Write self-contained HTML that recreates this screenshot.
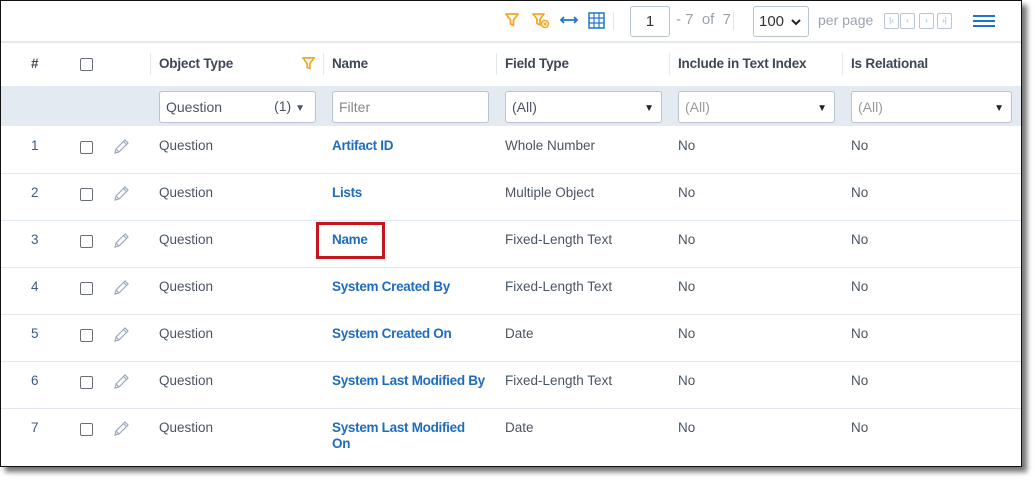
<!DOCTYPE html>
<html><head><meta charset="utf-8"><style>
*{margin:0;padding:0;box-sizing:border-box}
body{width:1035px;height:481px;background:#fff;position:relative;overflow:hidden;font-family:"Liberation Sans",Arial,sans-serif;font-size:13.5px;color:#4a5563}
.frame{position:absolute;left:0;top:0;width:1022px;height:467px;border:1.5px solid #111;border-top:1px solid #111;background:#fff;box-shadow:5px 5px 5px rgba(0,0,0,.55)}
.a{position:absolute;white-space:nowrap}
.hl{position:absolute;left:1px;width:1020px;height:1px;background:#e2e8f0}
.hd{font-weight:bold;color:#3d4756;top:56px;letter-spacing:-0.2px}
.sep{position:absolute;top:53px;width:1px;height:22px;background:#e3e8ee}
.inp{position:absolute;top:91px;height:32px;border:1px solid #b9c3cf;border-radius:3px;background:#fff;padding:7px 6px;font-size:14px;color:#4a5563}
.cb{position:absolute;left:80px;width:13px;height:13px;border:1px solid #6a6f76;border-radius:2px;background:#fff}
.lk{color:#1f6cbf;font-weight:bold;letter-spacing:-0.3px}
.tri{position:absolute;right:7px;top:11px;font-size:10px;color:#222}
.nb{position:absolute;top:13px;width:15px;height:16px;border:1px solid #b9c6d6;border-radius:2px;font-size:8px;color:#9fb0c6;text-align:center;line-height:14px}
</style></head><body>
<div class="frame"></div>
<svg class="a" style="left:504px;top:12px" width="16" height="16" viewBox="0 0 16 16"><path d="M2 2h12l-4.5 6v5.5l-3-1.5V8z" fill="none" stroke="#f5a623" stroke-width="1.8" stroke-linejoin="round"/></svg>
<svg class="a" style="left:532px;top:12px" width="18" height="17" viewBox="0 0 18 17"><path d="M1 2h11l-4 5v6l-3-1.5V7z" fill="none" stroke="#f5a623" stroke-width="1.8" stroke-linejoin="round"/><circle cx="13" cy="12" r="3.5" fill="none" stroke="#f5a623" stroke-width="1.5"/><path d="M11.5 10.5l3 3M14.5 10.5l-3 3" stroke="#f5a623" stroke-width="1.2"/></svg>
<svg class="a" style="left:559px;top:15px" width="20" height="10" viewBox="0 0 20 10"><path d="M2 5h16M5 2L2 5l3 3M15 2l3 3-3 3" fill="none" stroke="#1f74d0" stroke-width="1.8"/></svg>
<svg class="a" style="left:588px;top:12px" width="17" height="17" viewBox="0 0 17 17"><rect x="1" y="1" width="15" height="15" fill="none" stroke="#1f74d0" stroke-width="1.5"/><path d="M6 1v15M11 1v15M1 6h15M1 11h15" stroke="#1f74d0" stroke-width="1.2"/></svg>
<div class="a" style="left:613px;top:12px;width:1px;height:18px;background:#e2e6ea"></div>
<div class="a" style="left:630px;top:6px;width:40px;height:31px;border:1px solid #b9c3cf;border-radius:3px;text-align:center;line-height:29px;font-size:15px;color:#333">1</div>
<div class="a" style="left:676px;top:11px;font-size:15px;color:#9aa3ad">- 7 &nbsp;of &nbsp;7</div>
<div class="a" style="left:733px;top:12px;width:1px;height:18px;background:#e2e6ea"></div>
<div class="a" style="left:753px;top:6px;width:56px;height:31px;border:1px solid #b9c3cf;border-radius:3px;line-height:29px;font-size:15px;color:#333;padding-left:5px">100<svg style="position:absolute;right:7px;top:12px" width="10" height="7" viewBox="0 0 10 7"><path d="M1 1l4 4 4-4" fill="none" stroke="#222" stroke-width="2"/></svg></div>
<div class="a" style="left:818px;top:12px;font-size:14px;color:#9aa3ad">per page</div>
<div class="nb" style="left:884px">|‹</div><div class="nb" style="left:900px">‹</div><div class="nb" style="left:919px">›</div><div class="nb" style="left:937px">›|</div>
<div class="a" style="left:973px;top:15px;width:22px;height:2px;background:#1f74d0"></div>
<div class="a" style="left:973px;top:20px;width:22px;height:2px;background:#1f74d0"></div>
<div class="a" style="left:973px;top:25px;width:22px;height:2px;background:#1f74d0"></div>
<div class="hl" style="top:41px;height:2px"></div>
<div class="a hd" style="left:31px">#</div>
<div class="cb" style="top:58px"></div>
<div class="sep" style="left:150px"></div>
<div class="a hd" style="left:159px">Object Type</div>
<svg class="a" style="left:301px;top:56px" width="15" height="15" viewBox="0 0 16 16"><path d="M2 2h12l-4.5 6v5.5l-3-1.5V8z" fill="none" stroke="#f5a623" stroke-width="1.8" stroke-linejoin="round"/></svg>
<div class="sep" style="left:323px"></div>
<div class="a hd" style="left:332px">Name</div>
<div class="sep" style="left:496px"></div>
<div class="a hd" style="left:505px">Field Type</div>
<div class="sep" style="left:669px"></div>
<div class="a hd" style="left:678px">Include in Text Index</div>
<div class="sep" style="left:842px"></div>
<div class="a hd" style="left:851px">Is Relational</div>
<div class="a" style="left:1px;top:86px;width:1020px;height:40px;background:#e3eaf2"></div>
<div class="inp" style="left:159px;width:157px">Question<span style="position:absolute;right:10px;top:6px;font-size:14px">(1) <span style="font-size:10px">▼</span></span></div>
<div class="inp" style="left:332px;width:157px;color:#888">Filter</div>
<div class="inp" style="left:505px;width:157px">(All)<span class="tri">▼</span></div>
<div class="inp" style="left:678px;width:157px;color:#999">(All)<span class="tri">▼</span></div>
<div class="inp" style="left:851px;width:161px;color:#999">(All)<span class="tri">▼</span></div>
<div class="hl" style="top:173px"></div><div class="hl" style="top:220px"></div><div class="hl" style="top:267px"></div><div class="hl" style="top:314px"></div><div class="hl" style="top:361px"></div><div class="hl" style="top:408px"></div>
<div id="rows"></div>
<script>
var d=[["1","Artifact ID","Whole Number"],["2","Lists","Multiple Object"],["3","Name","Fixed-Length Text"],["4","System Created By","Fixed-Length Text"],["5","System Created On","Date"],["6","System Last Modified By","Fixed-Length Text"],["7","System Last Modified<br>On","Date"]];
var h="";
d.forEach(function(r,i){var y=138+i*47;
h+='<div class="a" style="left:31px;top:'+y+'px;color:#3d5a80">'+r[0]+'</div>';
h+='<div class="cb" style="top:'+(y+3)+'px"></div>';
h+='<svg class="a" style="left:112px;top:'+y+'px" width="18" height="18" viewBox="0 0 18 18"><path d="M3 15l1-4L13 2l3 3-9 9zM4 11l3 3M11.5 3.5l3 3" fill="none" stroke="#9aa8bd" stroke-width="1.2"/></svg>';
h+='<div class="a" style="left:159px;top:'+y+'px">Question</div>';
h+='<div class="a lk" style="left:332px;top:'+y+'px;line-height:16px">'+r[1]+'</div>';
h+='<div class="a" style="left:505px;top:'+y+'px">'+r[2]+'</div>';
h+='<div class="a" style="left:678px;top:'+y+'px">No</div>';
h+='<div class="a" style="left:851px;top:'+y+'px">No</div>';});
document.getElementById("rows").innerHTML=h;
</script>
<div class="a" style="left:316px;top:222px;width:69px;height:37px;border:3px solid #c4161c"></div>
</body></html>
